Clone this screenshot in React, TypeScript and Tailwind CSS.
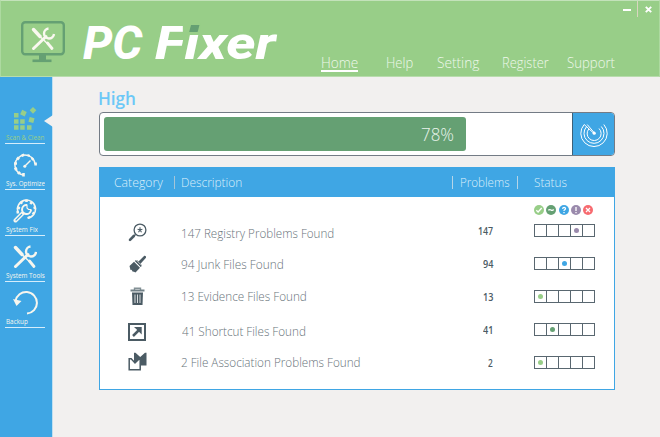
import { useLayoutEffect, useRef, type ReactNode } from 'react';

/** Single line of text condensed or widened to fill a given width. */
function Fit({ w, className = '', children }: { w: number; className?: string; children: ReactNode }) {
  const outer = useRef<HTMLSpanElement>(null);
  const inner = useRef<HTMLSpanElement>(null);
  useLayoutEffect(() => {
    if (!outer.current || !inner.current) return;
    outer.current.style.width = `${w}px`;
    inner.current.style.transform = `scaleX(${w / inner.current.offsetWidth})`;
  }, [w]);
  return (
    <span ref={outer} className={`block shrink-0 whitespace-nowrap ${className}`}>
      <span ref={inner} className="inline-block origin-left">{children}</span>
    </span>
  );
}

function ToolsCross() {
  return (
    <g>
      <path d="M2.5 2.5 L9 9.5" stroke="currentColor" strokeWidth="3.4" strokeLinecap="round" />
      <path d="M9 9.5 L21 21" stroke="currentColor" strokeWidth="1.5" />
      <path d="M16.5 16 L21 21.5" stroke="currentColor" strokeWidth="2.8" strokeLinecap="round" />
      <path d="M2.5 21.5 L15 9.5" stroke="currentColor" strokeWidth="3" strokeLinecap="round" />
      <path d="M17.5 1.5 A5 5 0 1 0 23 7" stroke="currentColor" strokeWidth="2.4" fill="none" />
    </g>
  );
}

function MonitorLogo() {
  return (
    <svg className="block h-[44px] w-[46px] text-[#faf8f0]" viewBox="0 0 46 44" fill="none">
      <rect x="2.2" y="2.2" width="41.6" height="32" rx="3" stroke="#65a073" strokeWidth="2.4" />
      <path d="M19 35h7v5h-7z" fill="#65a073" />
      <path d="M12.5 39.5h19v2.6h-19z" fill="#65a073" />
      <g transform="translate(11 7)"><ToolsCross /></g>
    </svg>
  );
}

function ScanIcon() {
  return (
    <svg className="block size-[24px]" viewBox="0 0 24 24" fill="#98ce88">
      <path d="M1 6h4.5v4.5H1zM1 12.2h4.5v4.5H1zM7.2 12.2h4.5v4.5H7.200zM1 18.200h4.500v4.500H1zM7.200 18.200h4.500v4.500H7.200zM14 18.200h4.500v4.500H14z" />
      <rect x="8" y="3.600" width="5" height="5" transform="rotate(25 10.500 6)" />
      <rect x="17.700" y="1" width="4.700" height="4.700" transform="rotate(45 20 3.300)" />
      <rect x="16" y="10.500" width="5" height="5" transform="rotate(15 18.500 13)" />
    </svg>
  );
}

function GaugeIcon() {
  return (
    <svg className="block size-[24px]" viewBox="0 0 24 24" fill="none" stroke="currentColor">
      <path d="M10.500 22 A10 10 0 0 1 5 5 A10 10 0 0 1 22 11" strokeWidth="1.500" />
      <path d="M22.600 9.500v3M20.500 5.300l-2 1.300M16 1.500l-.8 2M9.500 1l.8 2.500M4 4.500l2 2M1 10.500h3M1.500 16.500l2.600-1.200M5 21l2-2.200M10.500 20v3.500" strokeWidth="2.600" />
      <path d="M12 13 L17.500 7.500" strokeWidth="1.400" />
      <circle cx="11.800" cy="13.200" r="1.500" fill="currentColor" stroke="none" />
    </svg>
  );
}

function WrenchGearIcon() {
  return (
    <svg className="block size-[24px]" viewBox="0 0 24 24" fill="none" stroke="currentColor">
      <path d="M5 13 A9 9 0 1 1 14.500 19" strokeWidth="1.600" />
      <path d="M4 8.500l3 .8M7.500 2.800l1.600 2M13.500.500v2.500M19 3l-1.700 2M23 8.500l-2.500.5M21.500 15l-2-1.300M16.500 19.500l-1-2M3.500 13.500l2.500-.5" strokeWidth="2.600" />
      <path d="M2.500 21.500 L9.500 14.500" strokeWidth="4" strokeLinecap="round" />
      <path d="M2.700 21.300 L9 15" stroke="#3fa6e4" strokeWidth="1.200" />
      <path d="M14 6 A4.500 4.500 0 1 0 18 11" strokeWidth="2" />
      <path d="M14 5.500v3.500l1.500 1.500H18.500" strokeWidth="1.200" />
    </svg>
  );
}

function ToolsIcon() {
  return <svg className="block size-[24px]" viewBox="0 0 24 24" fill="none"><ToolsCross /></svg>;
}

function RestoreIcon() {
  return (
    <svg className="block size-[25px]" viewBox="0 0 25 25" fill="none">
      <path d="M2.500 11 A10.800 10.800 0 1 1 14 23.600" stroke="currentColor" strokeWidth="2" />
      <path d="M0 9 L8.500 11 L3.500 16 Z" fill="currentColor" />
    </svg>
  );
}

function SideItem({ icon, label, w, active = false }: { icon: ReactNode; label: string; w: number; active?: boolean }) {
  return (
    <li className={`flex h-[46px] w-[40px] shrink-0 flex-col border-b border-[#d5edfb] ${active ? 'text-[#98ce88]' : 'text-[#f7f6ee]'}`}>
      <div className="flex h-[33px] shrink-0 items-end pl-[8px]">{icon}</div>
      <Fit w={w} className="mt-[1px] ml-[0.5px] h-[10px] text-[7.500px] leading-[11px]">{label}</Fit>
    </li>
  );
}

function Radar() {
  return (
    <svg className="block size-[30px]" viewBox="0 0 30 30" fill="none" stroke="white" strokeWidth="1">
      <path d="M5.200 5.500 A13.200 13.200 0 1 0 24.800 5.500" />
      <path d="M7.500 7.700 A10 10 0 1 0 22.300 7.500" />
      <path d="M9.800 10 A7 7 0 1 0 20 9.500" />
      <path d="M5.200 5.500 L15 14.500 M8.200 5.500 L15.500 14" />
      <circle cx="15.200" cy="14.200" r="1.600" fill="white" stroke="none" />
    </svg>
  );
}

const slate = '#4b5b64';

function SearchStar() {
  return (
    <svg className="block size-[19px]" viewBox="0 0 19 19" fill="none" stroke={slate}>
      <circle cx="12" cy="7" r="5.900" strokeWidth="1.300" />
      <path d="M7.500 11.500 L5.500 13.500" strokeWidth="1.500" />
      <path d="M5.800 13 L2 16.800" strokeWidth="2.600" strokeLinecap="round" />
      <path d="M12 4.200v3M9.600 6.200l2.400.8 2.400-.8M10.500 9.300L12 7l1.500 2.300" strokeWidth="1.100" />
    </svg>
  );
}

function Brush() {
  return (
    <svg className="block size-[19px]" viewBox="0 0 19 19" fill={slate}>
      <path d="M1.500 11 L6 6.800 L12 12.800 L7.500 17.500 L5.500 16.500 L5 17 L3.500 14.800 L2.500 15 Z" />
      <path d="M6.800 6 L8 5 L9.600 5.600 L10.500 6.500 L16.300 .8 Q18.500 .5 18 2.800 L12.500 8.700 L13.700 10 L13.700 11 L12.700 12 Z" />
      <path d="M8.100 4.900 L13.900 10.700" stroke="white" strokeWidth=".6" />
    </svg>
  );
}

function Bin() {
  return (
    <svg className="block size-[19px]" viewBox="0 0 19 19" fill="none" stroke={slate}>
      <path d="M6.500 3V1.300h6V3" stroke="#849196" strokeWidth="1.400" />
      <path d="M2.500 3.500h14" stroke="#718087" strokeWidth="2" />
      <path d="M4 5.500h11l-.5 12.500h-10z" fill={slate} stroke="none" />
      <path d="M7 7.500v8.500M9.500 7.500v8.500M12 7.500v8.500" stroke="white" strokeWidth=".8" />
    </svg>
  );
}

function Shortcut() {
  return (
    <svg className="block size-[19px]" viewBox="0 0 19 19" fill="none" stroke={slate}>
      <rect x="1" y="2" width="16" height="16" strokeWidth="2" />
      <path d="M5 14L12 7" strokeWidth="2.500" />
      <path d="M6 5h7.700v7.500l-2-2-3.500-3.500z" fill={slate} stroke="none" />
    </svg>
  );
}

function FileLink() {
  return (
    <svg className="block size-[19px]" viewBox="0 0 19 19" fill={slate}>
      <path d="M6 .8h1.500l4.700 4.200 4.800-4.200h1.500v12.700h-6V17H6z" />
      <path d="M1.200 6.700h2L7 11l4.300-4.300h.9v11H1.200z" fill="white" stroke={slate} strokeWidth="1.500" />
    </svg>
  );
}

const levels = [
  { color: 'bg-[#98ce88]', glyph: <path d="M2.300 5.200l1.800 1.800 3.600-4" /> },
  { color: 'bg-[#65a073]', glyph: <path d="M2.300 5.300q1.300-1.300 2.700-.3t2.700-.5" /> },
  { color: 'bg-[#3fa6e4]', glyph: <><path d="M3.600 3.800q.2-1.500 1.500-1.500t1.400 1.300q0 .8-.8 1.200t-.7 1" /><path d="M5 7v1.200" /></> },
  { color: 'bg-[#9a8aac]', glyph: <path d="M5 2v4M5 7v1.200" /> },
  { color: 'bg-[#f76b70]', glyph: <path d="M3 3l4 4M7 3l-4 4" /> },
];

const rows = [
  { icon: <SearchStar />, text: '147 Registry Problems Found', w: 153, count: 147, cw: 15, level: 3, iconPad: 'pt-[4px]', textPad: 'pt-[4px] pl-0' },
  { icon: <Brush />, text: '94 Junk Files Found', w: 103, count: 94, cw: 10, level: 2, iconPad: 'pt-[1px]', textPad: 'pt-[1px] pl-0' },
  { icon: <Bin />, text: '13 Evidence Files Found', w: 126, count: 13, cw: 10, level: 0, iconPad: 'pt-0', textPad: 'pb-[1px] pl-0' },
  { icon: <Shortcut />, text: '41 Shortcut Files Found', w: 124, count: 41, cw: 10, level: 1, iconPad: 'pt-[3px]', textPad: 'pt-[2px] pl-px' },
  { icon: <FileLink />, text: '2 File Association Problems Found', w: 180, count: 2, cw: 5, level: 0, iconPad: 'pb-[2px]', textPad: 'pb-[1px] pl-0' },
];

const menu = [
  { label: 'Home', w: 37, gap: 'ml-0' },
  { label: 'Help', w: 27, gap: 'ml-[28px]' },
  { label: 'Setting', w: 42, gap: 'ml-[24px]' },
  { label: 'Register', w: 47, gap: 'ml-[23px]' },
  { label: 'Support', w: 48, gap: 'ml-[18px]' },
];

export default function App() {
  return (
    <div className="flex h-[437px] w-[660px] flex-col overflow-hidden bg-[#f2f0ef] font-['Open_Sans','Noto_Sans',sans-serif]">
      <header className="flex h-[77px] shrink-0 border border-t-[#c3e2ba] border-r-[#addaa0] border-b-[#b8dcad] border-l-[#addaa0] bg-[#98ce88]">
        <div className="pt-[19px] pl-[19px]"><MonitorLogo /></div>
        <h1 className="flex h-[60px] w-[217px] shrink-0 pt-[19px] pl-[17px] font-['Roboto',sans-serif] text-[46px] leading-[46px] font-extrabold text-white italic">
          <Fit w={59}>PC</Fit>
          <Fit w={121} className="ml-[13px]">
            F<span className="relative inline-block">i<span className="absolute top-[3px] right-[-2px] h-[9px] w-[15px] bg-[#98ce88]" /><span className="absolute top-[5px] right-[0px] h-[7px] w-[7px] -skew-x-12 bg-[#65a073]" /></span>xer
          </Fit>
        </h1>
        <div className="flex flex-1 flex-col">
          <div className="flex h-[53px] justify-end">
            <div className="flex h-[16px] w-[15px] border-r border-[#d9d6bf]"><span className="mt-[8px] h-[1.500px] w-[8px] bg-white" /></div>
            <svg className="mt-[5px] mr-[7px] ml-[7px] size-[7px]" viewBox="0 0 7 7" stroke="white" strokeWidth="1.900"><path d="M.8.800l5.400 5.400M6.200.800L.8 6.200" /></svg>
          </div>
          <nav className="flex pl-[38px] text-[14px] leading-[17px] font-light text-[#eef8eb]">
            {menu.map((m, i) => (
              <div key={m.label} className={`h-[18px] shrink-0 ${m.gap} ${i === 0 ? 'border-b-2 border-white' : ''}`}>
                <Fit w={m.w}>{m.label}</Fit>
              </div>
            ))}
          </nav>
        </div>
      </header>

      <div className="flex min-h-0 flex-1">
        <aside className="flex w-[53px] shrink-0 justify-between border-r border-[#c0dff0] bg-[#3fa6e4]">
          <ul className="flex flex-col pt-[21px] pl-[5px]">
            <SideItem icon={<ScanIcon />} label="Scan & Clean" w={38} active />
            <SideItem icon={<GaugeIcon />} label="Sys. Optimize" w={39} />
            <SideItem icon={<WrenchGearIcon />} label="System Fix" w={32} />
            <SideItem icon={<ToolsIcon />} label="System Tools" w={39} />
            <SideItem icon={<RestoreIcon />} label="Backup" w={22} />
          </ul>
          <svg className="mt-[38px] -mr-px -ml-2 h-[12px] w-[9px]" viewBox="0 0 9 12"><path d="M9 0v12L0 6z" fill="#f2f0ef" /></svg>
        </aside>

        <main className="flex w-[562px] flex-col pl-[46px]">
          <h2 className="mt-[9px] h-[26px] text-[18px] leading-[24px] font-semibold text-[#6cc8f7]"><Fit w={38} className="-ml-px">High</Fit></h2>

          <section className="flex h-[44px] shrink-0 overflow-hidden rounded-[4px] border border-[#737b85] bg-white">
            <div className="flex flex-1 p-[4px]">
              <div className="flex h-[34px] w-[362px] items-center justify-end rounded-[3px] bg-[#65a073] pr-[12px] text-[18px] leading-[18px] font-light text-[#eaf4ec]">
                <Fit w={33}>78%</Fit>
              </div>
            </div>
            <button className="flex w-[42px] items-center justify-center border-l border-[#3d6179] bg-[#3fa6e4]"><Radar /></button>
          </section>

          <section className="mt-[11px] flex h-[223px] shrink-0 flex-col border border-[#3fa6e4] bg-white">
            <div className="flex h-[29px] shrink-0 items-center bg-[#3fa6e4] pl-[14px] text-[12.500px] leading-[16px] font-light text-[#dceffa]">
              <Fit w={49}>Category</Fit>
              <span className="ml-[11px] h-[13px] w-px bg-[#a5c5d8]" />
              <Fit w={61} className="ml-[6px]">Description</Fit>
              <span className="ml-[210px] h-[13px] w-px bg-[#b5d5e8]" />
              <Fit w={50} className="ml-[7px]">Problems</Fit>
              <span className="ml-[7px] h-[13px] w-px bg-[#b5d5e8]" />
              <Fit w={33} className="ml-[16px]">Status</Fit>
            </div>
            <div className="flex h-[17px] shrink-0 items-end gap-[2.300px] pl-[434px]">
              {levels.map((l) => (
                <span key={l.color} className={`-mb-px size-[10px] rounded-full ${l.color}`}>
                  <svg className="block size-[10px]" viewBox="0 0 10 10" fill="none" stroke="white" strokeWidth="1.300">{l.glyph}</svg>
                </span>
              ))}
            </div>
            {rows.map((r) => (
              <div key={r.text} className="flex h-[33px] shrink-0 items-center">
                <div className={`w-[81px] pl-[28px] ${r.iconPad}`}>{r.icon}</div>
                <div className={`w-[280px] text-[13px] leading-[18px] font-light text-[#68737a] ${r.textPad}`}><Fit w={r.w}>{r.text}</Fit></div>
                <div className="flex w-[32px] justify-end text-[10px] leading-[14px] font-semibold text-[#4b5b64]"><Fit w={r.cw}>{r.count}</Fit></div>
                <div className="ml-[41px] flex h-[13px] w-[61px] border border-r-0 border-[#596770]">
                  {levels.map((l, i) => (
                    <span key={l.color} className="flex w-[12px] shrink-0 items-center justify-center border-r border-[#596770]">
                      {i === r.level && <span className={`size-[5px] rounded-full ${l.color}`} />}
                    </span>
                  ))}
                </div>
              </div>
            ))}
          </section>
        </main>
      </div>
    </div>
  );
}
